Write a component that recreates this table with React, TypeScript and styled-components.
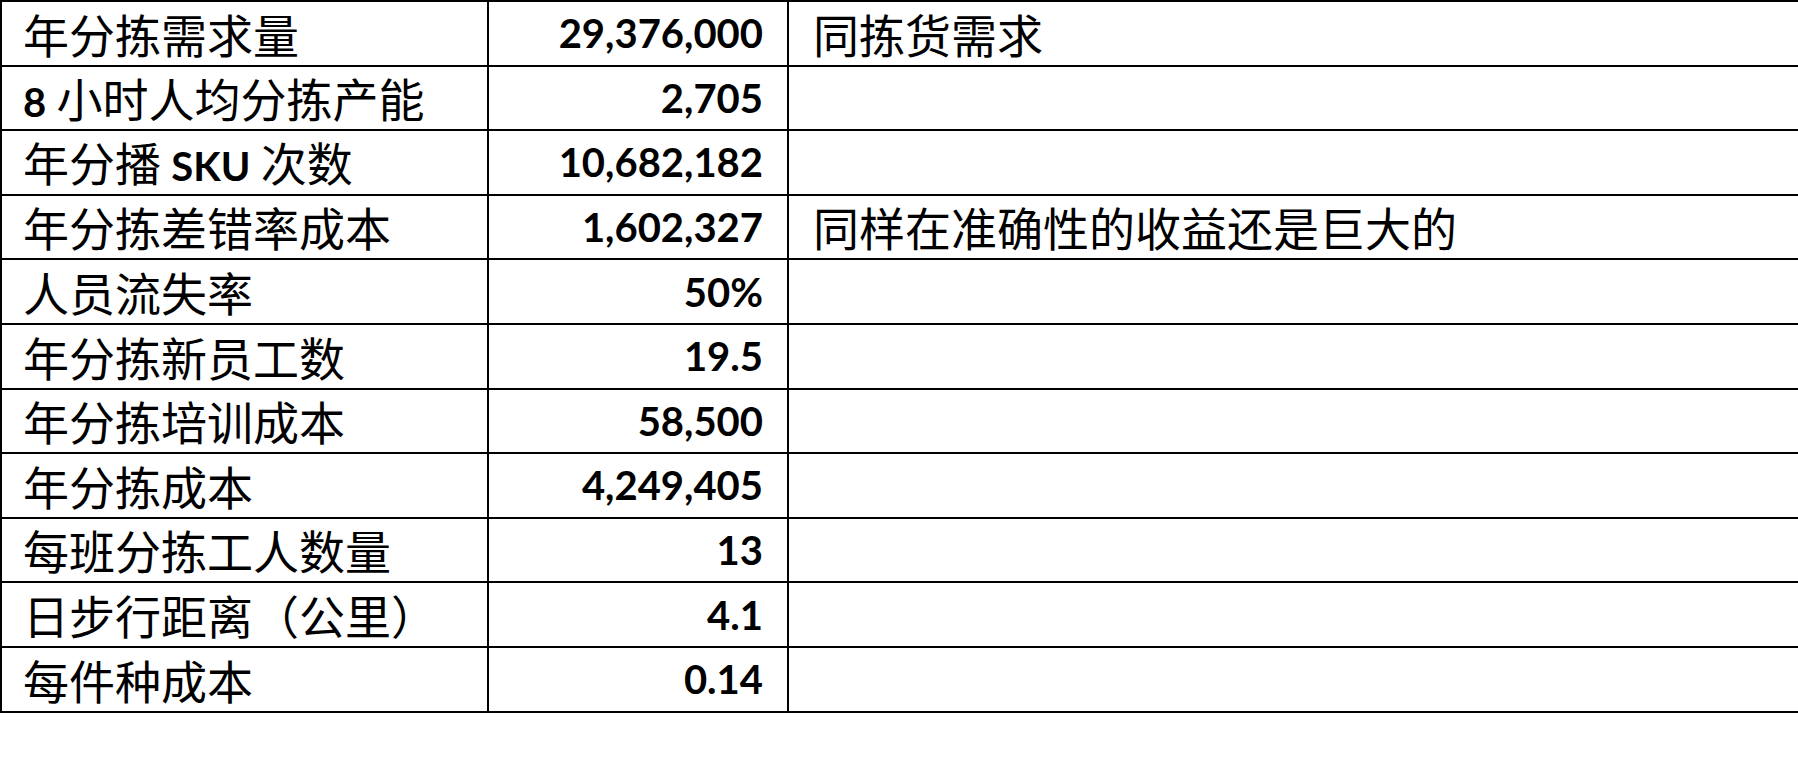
import styled, { createGlobalStyle } from 'styled-components';

const GlobalStyle = createGlobalStyle`
  html, body {
    margin: 0;
    padding: 0;
    background: #ffffff;
    overflow: hidden;
  }
`;

type Row = { label: string; value: string; note?: string };

const rows: Row[] = [
  { label: '年分拣需求量', value: '29,376,000', note: '同拣货需求' },
  { label: '8 小时人均分拣产能', value: '2,705' },
  { label: '年分播 SKU 次数', value: '10,682,182' },
  { label: '年分拣差错率成本', value: '1,602,327', note: '同样在准确性的收益还是巨大的' },
  { label: '人员流失率', value: '50%' },
  { label: '年分拣新员工数', value: '19.5' },
  { label: '年分拣培训成本', value: '58,500' },
  { label: '年分拣成本', value: '4,249,405' },
  { label: '每班分拣工人数量', value: '13' },
  { label: '日步行距离（公里）', value: '4.1' },
  { label: '每件种成本', value: '0.14' },
];

// latin runs are bold (Calibri in the original sheet), CJK stays regular
const MixedText = ({ text }: { text: string }) => (
  <span>
    {text.split(/([A-Za-z0-9.,%]+)/).map((part, i) =>
      /[A-Za-z0-9]/.test(part) ? <Latin key={i}>{part}</Latin> : <span key={i}>{part}</span>,
    )}
  </span>
);

const App = () => {
  return (
    <>
      <GlobalStyle />
      <Sheet>
        {rows.map((row) => (
          <Line key={row.label}>
            <LabelCell>
              <MixedText text={row.label} />
            </LabelCell>
            <ValueCell>
              <Latin>{row.value}</Latin>
            </ValueCell>
            <NoteCell>{row.note}</NoteCell>
          </Line>
        ))}
      </Sheet>
    </>
  );
};

export default App;

const Sheet = styled.div`
  width: 1830px;
  display: grid;
  grid-template-columns: 487px 300px 1fr;
  border-top: 2px solid #000;
  border-left: 2px solid #000;
  font-family: 'Noto Sans CJK SC', 'Noto Sans', sans-serif;
  font-size: 46px;
  color: #000;
`;

const Line = styled.div`
  display: contents;
`;

const Cell = styled.div`
  box-sizing: border-box;
  height: 64.6px;
  border-right: 2px solid #000;
  border-bottom: 2px solid #000;
  display: flex;
  align-items: center;
  white-space: pre;
  line-height: 1.2;
`;

const LabelCell = styled(Cell)`
  padding-left: 21px;
`;

const ValueCell = styled(Cell)`
  justify-content: flex-end;
  padding-right: 24px;
`;

const NoteCell = styled(Cell)`
  padding-left: 24px;
`;

const Latin = styled.span`
  font-family: Lato, 'Noto Sans', sans-serif;
  font-weight: 700;
  font-size: 40px;
`;
